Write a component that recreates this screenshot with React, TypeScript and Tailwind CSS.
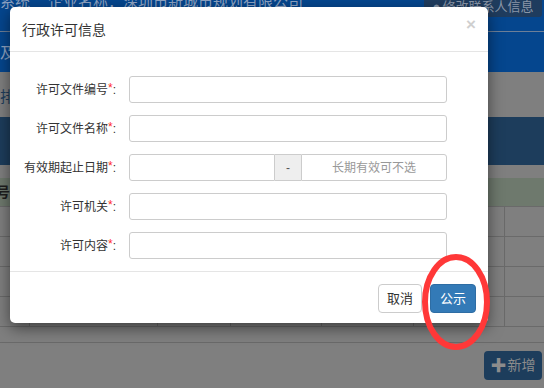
const font = "font-['Liberation_Sans','Noto_Sans_CJK_SC',sans-serif]";

const fields = [
  { label: "许可文件编号" },
  { label: "许可文件名称" },
  { label: "有效期起止日期", range: true },
  { label: "许可机关" },
  { label: "许可内容" },
];

function Background() {
  return (
    <div className="flex h-[388px] w-[544px] flex-col bg-[#7f7f7f]">
      <div className="h-[72px] bg-[#05468e]">
        <div className="flex h-[32px] items-start border-b border-[#6d7f98] text-[#8ea3c2]">
          <span className="-mt-[9px] text-[15px]">系统</span>
          <span className="-mt-[9px] ml-[18px] text-[15px]">企业名称：深圳市新城市规划有限公司</span>
          <div className="-mt-[4px] ml-auto mr-[2px] flex h-[21px] w-[118px] items-center justify-center gap-[2px] rounded-[3px] bg-[#1f3c5e] text-[13px] text-[#8a96a8]">
            <span>&#9679;</span>
            <span>修改联系人信息</span>
          </div>
        </div>
        <div className="pt-[10px] text-[15px] text-[#8ea3c2]">及</div>
      </div>
      <div className="h-[45px] pt-[14px] text-[15px] text-[#1d3d5c]">排</div>
      <div className="h-[48px] bg-[#1d3d5c]" />
      <div className="h-[13px]" />
      <div className="flex h-[29px] items-center border-b border-[#6a6a6a] bg-[#6e796d] text-[14px] font-bold text-[#1e1e1e]">
        <span className="-ml-[4px]">号</span>
      </div>
      {[0, 1, 2, 3].map((i) => (
        <div key={i} className="flex h-[30px] border-b border-[#6a6a6a]">
          <div className="w-[30px] border-r border-[#6a6a6a]" />
          <div className="w-[128px] border-r border-[#6a6a6a]" />
          <div className="w-[73px] border-r border-[#6a6a6a]" />
          <div className="w-[91px] border-r border-[#6a6a6a]" />
          <div className="w-[92px] border-r border-[#6a6a6a]" />
          <div className="w-[91px] border-r border-[#6a6a6a]" />
        </div>
      ))}
      <div className="h-[16px] border-b border-[#6a6a6a]" />
      <div className="flex justify-end pt-[8px] pr-[2px]">
        <div className="flex h-[29px] w-[58px] items-center justify-center gap-[1px] rounded-[4px] bg-[#1d3d5c] text-[14px] text-[#8c8c8c]">
          <span className="text-[16px] font-bold leading-none">✚</span>
          <span>新增</span>
        </div>
      </div>
    </div>
  );
}

function Field({ label, range }: { label: string; range?: boolean }) {
  return (
    <div className="flex items-center">
      <label className="w-[107px] pr-[1px] text-right text-[12px] text-[#333]">
        {label}
        <span className="relative -top-[2px] text-[#ff2a2a]">*</span>:
      </label>
      <div className="ml-[12px] flex h-[27px] w-[318px]">
        {range ? (
          <>
            <input className="h-full w-[146px] rounded-l-[3px] border border-[#ccc] bg-white outline-none" />
            <span className="flex h-full w-[26px] items-center justify-center border-y border-[#ccc] bg-[#eee] text-[12px] text-[#555]">
              -
            </span>
            <input
              placeholder="长期有效可不选"
              className="h-full w-[146px] rounded-r-[3px] border border-[#ccc] bg-white text-center text-[12px] outline-none placeholder:text-[#999]"
            />
          </>
        ) : (
          <input className="h-full w-full rounded-[3px] border border-[#ccc] bg-white outline-none" />
        )}
      </div>
    </div>
  );
}

export default function App() {
  return (
    <div className={`relative h-[388px] w-[544px] overflow-hidden ${font}`}>
      <Background />

      <div className="absolute left-[10px] top-[7px] flex h-[316px] w-[478px] flex-col rounded-[5px] bg-white shadow-[0_5px_15px_rgba(0,0,0,0.5)]">
        <div className="flex h-[45px] items-center justify-between border-b border-[#e5e5e5] pl-[12px] pr-[12px]">
          <h4 className="pt-[2px] text-[14px] text-[#333]">行政许可信息</h4>
          <span className="-mt-[10px] text-[17px] font-bold leading-none text-[#cfcfcf]">×</span>
        </div>
        <div className="flex flex-1 flex-col gap-[12px] pt-[24px]">
          {fields.map((f) => (
            <Field key={f.label} label={f.label} range={f.range} />
          ))}
        </div>
        <div className="flex h-[52px] items-start justify-end gap-[8px] border-t border-[#e5e5e5] pr-[12px] pt-[12px]">
          <button className="h-[29px] w-[44px] rounded-[4px] border border-[#ccc] bg-white text-[13px] text-[#333]">
            取消
          </button>
          <button className="h-[29px] w-[46px] rounded-[4px] border border-[#2e6da4] bg-[#337ab7] text-[13px] text-white">
            公示
          </button>
        </div>
      </div>

      <svg className="absolute left-[420px] top-[252px]" width="72" height="100" viewBox="0 0 72 100">
        <ellipse cx="36" cy="50" rx="31" ry="45" fill="none" stroke="#ff3838" strokeWidth="6" />
      </svg>
    </div>
  );
}
